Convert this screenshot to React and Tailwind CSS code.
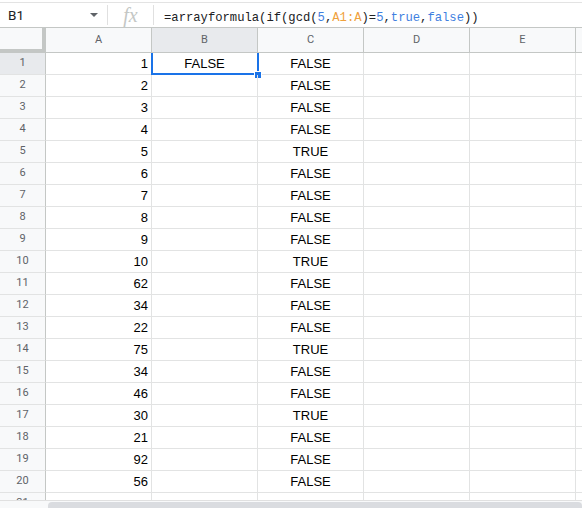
import React from "react";

const COLS = ["A", "B", "C", "D", "E", ""];
const A_VALUES = [1, 2, 3, 4, 5, 6, 7, 8, 9, 10, 62, 34, 22, 75, 34, 46, 30, 21, 92, 56];
const C_VALUES = A_VALUES.map((n) => (n % 5 === 0 ? "TRUE" : "FALSE"));

function Formula() {
  return (
    <span className="whitespace-pre font-['Liberation_Mono',monospace] text-[12.2px] text-[#202124]">
      =arrayformula(if(gcd(<span className="text-[#3f7fdf]">5</span>,
      <span className="text-[#f0a13c]">A1:A</span>)=<span className="text-[#3f7fdf]">5</span>,
      <span className="text-[#3f7fdf]">true</span>,<span className="text-[#3f7fdf]">false</span>))
    </span>
  );
}

function FormulaBar() {
  return (
    <div className="mt-[2px] flex h-[26px] flex-none items-center border-y border-t-[#e3e3e3] border-b-[#c4c7c5] bg-white">
      <div className="flex w-[107px] items-center justify-between pl-2 pr-[9px]">
        <span className="font-['Roboto',sans-serif] text-[13.5px] text-[#202124]">B1</span>
        <svg viewBox="0 0 8 4" className="h-[4px] w-[8px]" aria-hidden="true">
          <path d="M0 0h8L4 4z" fill="#5f6368" />
        </svg>
      </div>
      <div className="h-[20px] w-px bg-[#e0e0e0]" />
      <div className="flex w-[45px] items-center justify-center">
        <span className="font-['Liberation_Serif',serif] text-[20px] italic leading-none text-[#c4c7c5]">fx</span>
      </div>
      <div className="h-[20px] w-px bg-[#e0e0e0]" />
      <div className="pl-[10px]">
        <Formula />
      </div>
    </div>
  );
}

function HeaderRow() {
  return (
    <div className="flex h-[25px] flex-none">
      <div className="h-[25px] w-[46px] flex-none border-r-4 border-b-4 border-[#c4c7c5] bg-[#f8f9fa]" />
      {COLS.map((c, i) => (
        <div
          key={i}
          className={`flex h-[25px] w-[106px] flex-none items-center justify-center border-r border-b border-[#c4c7c5] font-['Roboto',sans-serif] text-[11px] text-[#5f6368] ${
            c === "B" ? "bg-[#e8eaed]" : "bg-[#f8f9fa]"
          }`}
        >
          {c}
        </div>
      ))}
    </div>
  );
}

function Row({ index, a, c }) {
  const selected = index === 1;
  return (
    <div className="flex h-[22px]">
      <div
        className={`flex h-[22px] w-[46px] flex-none items-center justify-center border-r border-b border-r-[#c4c7c5] border-b-[#e2e3e3] font-['Roboto',sans-serif] text-[11px] text-[#5f6368] ${
          selected ? "bg-[#e8eaed]" : "bg-[#f8f9fa]"
        }`}
      >
        {index}
      </div>
      <div className="flex h-[22px] w-[106px] flex-none items-center justify-end border-r border-b border-[#e2e3e3] pr-[3px] font-['Liberation_Sans',sans-serif] text-[13px] text-black">
        {a}
      </div>
      <div className="relative z-10 flex h-[22px] w-[106px] flex-none items-center justify-center border-r border-b border-[#e2e3e3] font-['Liberation_Sans',sans-serif] text-[13px] text-black">
        {selected ? "FALSE" : ""}
        {selected ? (
          <>
            <div className="absolute -left-px top-0 bottom-[-1px] w-[2px] bg-[#1a73e8]" />
            <div className="absolute right-[-2px] top-0 bottom-[-1px] w-[2px] bg-[#1a73e8]" />
            <div className="absolute -left-px right-[-2px] bottom-[-1px] h-[2px] bg-[#1a73e8]" />
            <div className="absolute right-[-5px] bottom-[-5px] h-[8px] w-[8px] border border-white bg-[#1a73e8]" />
          </>
        ) : null}
      </div>
      <div className="flex h-[22px] w-[106px] flex-none items-center justify-center border-r border-b border-[#e2e3e3] font-['Liberation_Sans',sans-serif] text-[13px] text-black">
        {c}
      </div>
      <div className="h-[22px] w-[106px] flex-none border-r border-b border-[#e2e3e3]" />
      <div className="h-[22px] w-[106px] flex-none border-r border-b border-[#e2e3e3]" />
      <div className="h-[22px] w-[106px] flex-none border-r border-b border-[#e2e3e3]" />
    </div>
  );
}

export default function App() {
  return (
    <div className="flex h-[508px] w-[582px] flex-col overflow-hidden bg-white">
      <FormulaBar />
      <HeaderRow />
      <div className="h-[447px] flex-none overflow-hidden">
        {A_VALUES.map((a, i) => (
          <Row key={i} index={i + 1} a={a} c={C_VALUES[i]} />
        ))}
        <Row index={21} a="" c="" />
      </div>
      <div className="flex h-[8px] flex-none border-t border-[#e0e0e0] bg-[#f8f9fa] pt-[1px]">
        <div className="ml-[48px] flex-1 rounded-t-[4px] bg-[#dadce0]" />
      </div>
    </div>
  );
}
